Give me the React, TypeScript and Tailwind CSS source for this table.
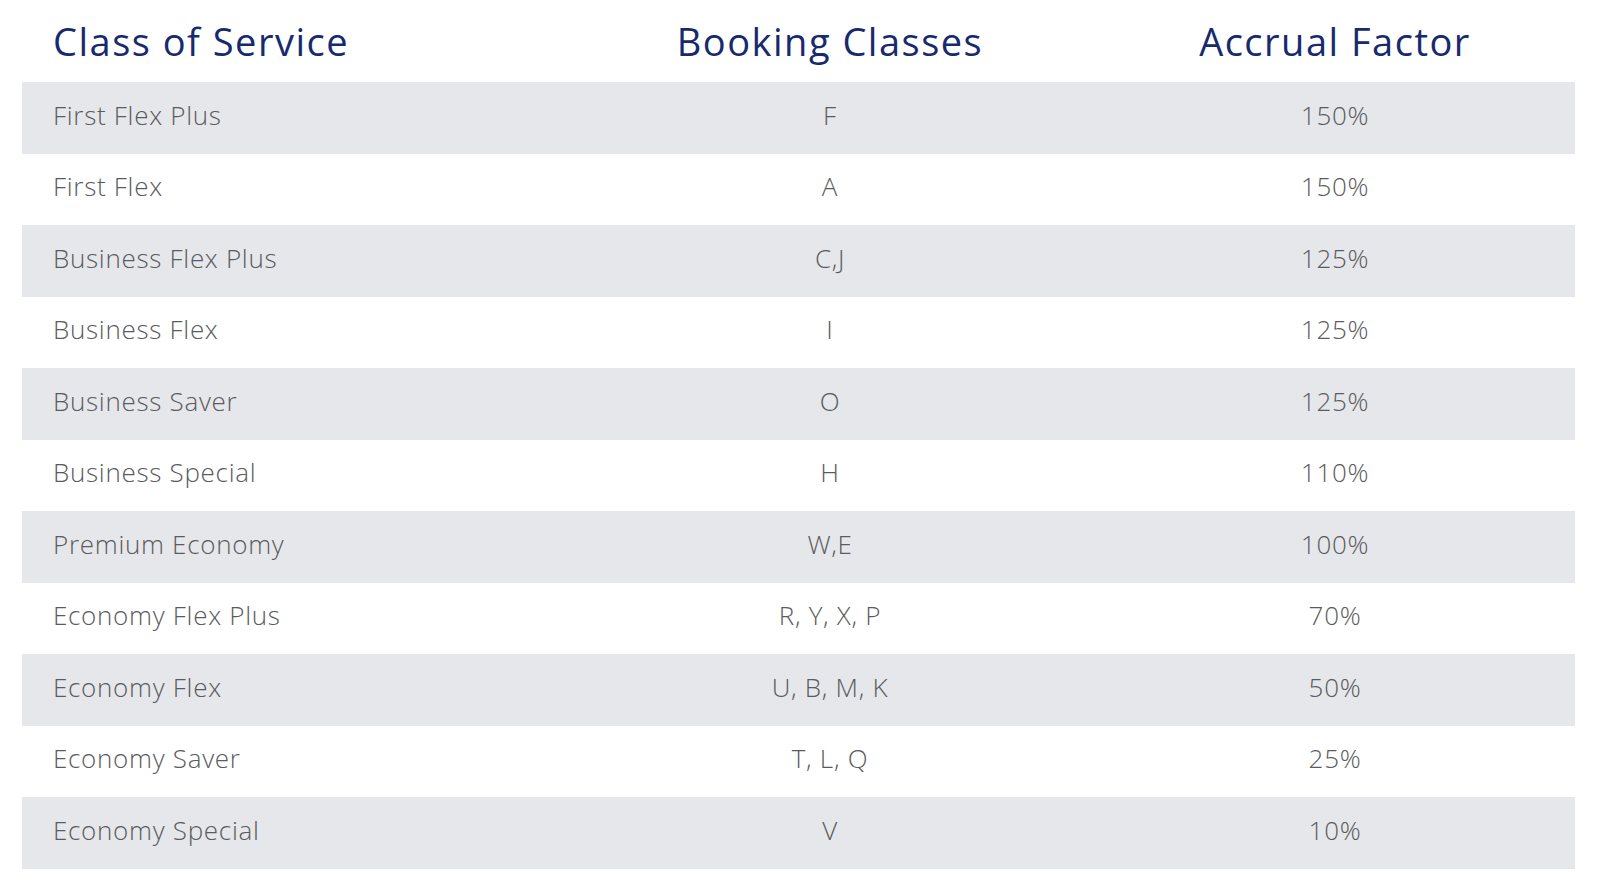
import React from "react";

const rows: [string, string, string][] = [
  ["First Flex Plus", "F", "150%"],
  ["First Flex", "A", "150%"],
  ["Business Flex Plus", "C,J", "125%"],
  ["Business Flex", "I", "125%"],
  ["Business Saver", "O", "125%"],
  ["Business Special", "H", "110%"],
  ["Premium Economy", "W,E", "100%"],
  ["Economy Flex Plus", "R, Y, X, P", "70%"],
  ["Economy Flex", "U, B, M, K", "50%"],
  ["Economy Saver", "T, L, Q", "25%"],
  ["Economy Special", "V", "10%"],
];

export default function App() {
  return (
    <div className="w-[1600px] h-[889px] bg-white font-['Open_Sans',sans-serif] pl-[22px] pr-[25px]">
      <div className="grid grid-cols-[543px_530px_1fr] h-[82px] items-center text-[#172a6e] text-[38px] font-medium tracking-[1.5px]">
        <div className="pl-[31px]">Class of Service</div>
        <div className="text-center">Booking Classes</div>
        <div className="text-center">Accrual Factor</div>
      </div>
      {rows.map((r, i) => (
        <div
          key={i}
          className={`grid grid-cols-[543px_530px_1fr] h-[71.5px] items-center text-[26px] font-light tracking-[0.7px] text-[#5a5b5e] pb-[5px] ${
            i % 2 === 0 ? "bg-[#e6e7ea]" : "bg-white"
          }`}
        >
          <div className="pl-[31px]">{r[0]}</div>
          <div className="text-center">{r[1]}</div>
          <div className="text-center">{r[2]}</div>
        </div>
      ))}
    </div>
  );
}
